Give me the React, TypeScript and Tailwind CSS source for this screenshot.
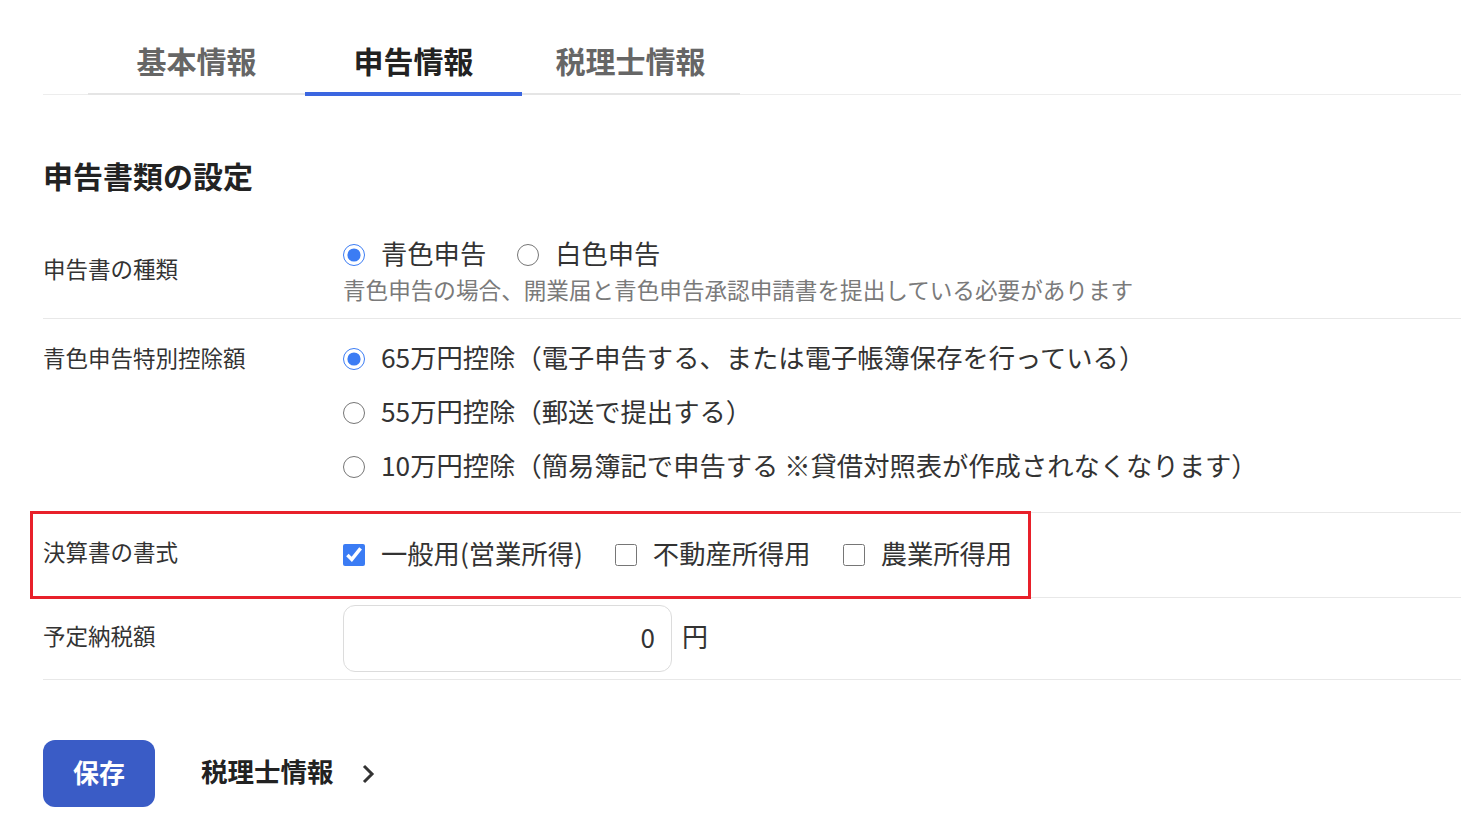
import { useState } from "react";

const font = "font-['Noto_Sans_CJK_JP','Noto_Sans',sans-serif]";

const tabs = ["基本情報", "申告情報", "税理士情報"];

const deductions = [
  "65万円控除（電子申告する、または電子帳簿保存を行っている）",
  "55万円控除（郵送で提出する）",
  "10万円控除（簡易簿記で申告する ※貸借対照表が作成されなくなります）",
];

const formats = ["一般用(営業所得)", "不動産所得用", "農業所得用"];

export default function App() {
  const [activeTab, setActiveTab] = useState(1);
  const [kind, setKind] = useState("blue");
  const [deduction, setDeduction] = useState(0);
  const [checked, setChecked] = useState<boolean[]>([true, false, false]);
  const [amount, setAmount] = useState("0");

  return (
    <div className={`${font} min-h-screen bg-white pl-[43px] text-[#333]`}>
      {/* tabs */}
      <div className="border-b border-[#ededed] pt-[30px]">
        <div className="relative -mb-px ml-[45px] flex w-[652px] border-b-2 border-[#e5e5e5]">
          {tabs.map((tab, i) => (
            <button
              key={tab}
              onClick={() => setActiveTab(i)}
              className={`relative flex h-[63px] w-[217px] items-center justify-center pb-[2px] text-[30px] font-bold ${
                activeTab === i ? "text-[#222]" : "text-[#666]"
              }`}
            >
              {tab}
              {activeTab === i && (
                <span className="absolute -bottom-[3px] left-0 h-[4px] w-full bg-[#3b66e0]" />
              )}
            </button>
          ))}
        </div>
      </div>

      <h2 className="mt-[58px] text-[30px] leading-[44px] font-bold text-[#222]">
        申告書類の設定
      </h2>

      <div className="mt-[29px]">
        {/* 申告書の種類 */}
        <div className="flex items-center border-b border-[#e8e8e8] py-[11px]">
          <div className="w-[300px] pb-[6px] text-[22.5px]">申告書の種類</div>
          <div>
            <div className="flex h-[36px] items-center text-[26.3px]">
              <label className="mr-[31px] flex items-center">
                <input
                  type="radio"
                  name="kind"
                  checked={kind === "blue"}
                  onChange={() => setKind("blue")}
                  className="m-0 h-[22px] w-[22px] accent-[#3b7cf4]"
                />
                <span className="ml-[16px] pb-[4px]">青色申告</span>
              </label>
              <label className="flex items-center">
                <input
                  type="radio"
                  name="kind"
                  checked={kind === "white"}
                  onChange={() => setKind("white")}
                  className="m-0 h-[22px] w-[22px] accent-[#3b7cf4]"
                />
                <span className="ml-[16px] pb-[4px]">白色申告</span>
              </label>
            </div>
            <p className="mt-[2px] pb-[2px] text-[22.6px] leading-[30px] text-[#7a7a7a]">
              青色申告の場合、開業届と青色申告承認申請書を提出している必要があります
            </p>
          </div>
        </div>

        {/* 青色申告特別控除額 */}
        <div className="flex border-b border-[#e8e8e8] pt-[13px] pb-[18px]">
          <div className="h-[54px] w-[300px] text-[22.5px] leading-[50px]">
            青色申告特別控除額
          </div>
          <div>
            {deductions.map((d, i) => (
              <label key={d} className="flex h-[54px] items-center text-[26.3px]">
                <input
                  type="radio"
                  name="deduction"
                  checked={deduction === i}
                  onChange={() => setDeduction(i)}
                  className="m-0 h-[22px] w-[22px] accent-[#3b7cf4]"
                />
                <span className="ml-[16px] pb-[4px]">{d}</span>
              </label>
            ))}
          </div>
        </div>

        {/* 決算書の書式 */}
        <div className="relative flex h-[85px] items-center border-b border-[#e8e8e8]">
          <div className="w-[300px] pb-[6px] text-[22.5px]">決算書の書式</div>
          <div className="flex items-center text-[26.3px]">
            {formats.map((f, i) => (
              <label key={f} className="mr-[32px] flex items-center">
                <input
                  type="checkbox"
                  checked={checked[i]}
                  onChange={() =>
                    setChecked(checked.map((c, j) => (j === i ? !c : c)))
                  }
                  className="m-0 h-[22px] w-[22px] accent-[#3b7cf4]"
                />
                <span className="ml-[16px] pb-[4px]">{f}</span>
              </label>
            ))}
          </div>
          <div className="pointer-events-none absolute -top-[2px] -left-[13px] h-[88px] w-[1001px] border-[3px] border-[#e8202a]" />
        </div>

        {/* 予定納税額 */}
        <div className="flex h-[82px] items-center border-b border-[#e8e8e8]">
          <div className="w-[300px] pb-[6px] text-[22.5px]">予定納税額</div>
          <input
            value={amount}
            onChange={(e) => setAmount(e.target.value)}
            className="h-[67px] w-[329px] rounded-[12px] border border-[#dcdcdc] pr-[16px] pb-[5px] text-right text-[26px] outline-none"
          />
          <span className="ml-[10px] pb-[6px] text-[26px]">円</span>
        </div>
      </div>

      {/* actions */}
      <div className="mt-[60px] flex items-center">
        <button className="flex h-[67px] w-[112px] items-center justify-center rounded-[12px] bg-[#3a5cc6] pb-[5px] text-[26px] font-bold text-white">
          保存
        </button>
        <button className="ml-[46px] flex items-center pb-[5px] text-[26.5px] font-bold text-[#222]">
          税理士情報
          <svg
            width="16"
            height="22"
            viewBox="0 0 16 22"
            className="mt-[5px] ml-[26px]"
            fill="none"
            stroke="#333"
            strokeWidth="3"
          >
            <polyline points="4,3 12,11 4,19" />
          </svg>
        </button>
      </div>
    </div>
  );
}
